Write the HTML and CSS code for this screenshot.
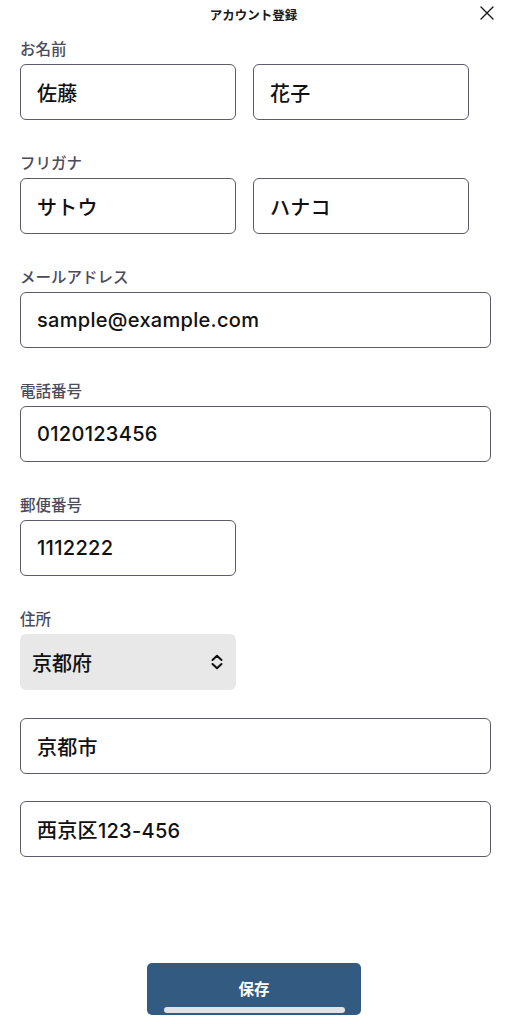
FILE: index.html
```html
<!DOCTYPE html>
<html lang="ja">
<head>
<meta charset="utf-8">
<link rel="stylesheet" href="styles.css">
</head>
<body>
<div class="page">
  <header class="header">
    <h1 class="title">アカウント登録</h1>
    <button class="close" aria-label="閉じる">
      <svg width="14" height="14" viewBox="0 0 14 14"><path d="M1 1L13 13M13 1L1 13" stroke="#1a1a1a" stroke-width="1.4" fill="none" stroke-linecap="round"/></svg>
    </button>
  </header>
  <form class="form">
    <div class="group">
      <div class="label">お名前</div>
      <div class="row">
        <div class="field half">佐藤</div>
        <div class="field half">花子</div>
      </div>
    </div>
    <div class="group">
      <div class="label">フリガナ</div>
      <div class="row">
        <div class="field half">サトウ</div>
        <div class="field half">ハナコ</div>
      </div>
    </div>
    <div class="group">
      <div class="label">メールアドレス</div>
      <div class="field full">sample@example.com</div>
    </div>
    <div class="group">
      <div class="label">電話番号</div>
      <div class="field full">0120123456</div>
    </div>
    <div class="group">
      <div class="label">郵便番号</div>
      <div class="field half">1112222</div>
    </div>
    <div class="group address">
      <div class="label">住所</div>
      <div class="select half">
        <span>京都府</span>
        <svg width="14" height="16" viewBox="0 0 14 16"><path d="M2.5 6L7 1.8L11.5 6M2.5 10L7 14.2L11.5 10" stroke="#111" stroke-width="2" fill="none" stroke-linecap="round" stroke-linejoin="round"/></svg>
      </div>
      <div class="field full">京都市</div>
      <div class="field full">西京区123-456</div>
    </div>
  </form>
  <div class="footer">
    <button class="save" type="button">保存<span class="home"></span></button>
  </div>
</div>
</body>
</html>
```
FILE: styles.css
```css
* { box-sizing: border-box; }
html, body { margin: 0; padding: 0; background: #fff; }
body {
  font-family: "Noto Sans CJK JP", "Noto Sans", sans-serif;
  color: #111;
}
.page {
  width: 507px;
  height: 1024px;
  display: flex;
  flex-direction: column;
  position: relative;
}
.header {
  height: 29px;
  display: flex;
  align-items: center;
  justify-content: center;
  position: relative;
}
.title {
  margin: 0;
  font-size: 12.5px;
  font-weight: 700;
  color: #1a1a1a;
  line-height: 29px;
}
.close {
  position: absolute;
  right: 13px;
  top: 6px;
  width: 14px;
  height: 14px;
  padding: 0;
  border: 0;
  background: none;
  display: flex;
}
.form {
  padding: 8px 16px 0 20px;
  display: flex;
  flex-direction: column;
  gap: 31px;
}
.group {
  display: flex;
  flex-direction: column;
}
.label {
  font-size: 15.5px;
  line-height: 22px;
  color: #4a4b5c;
  font-weight: 500;
  margin-bottom: 5px;
}
.row {
  display: flex;
  gap: 17px;
}
.field {
  height: 56px;
  border: 1.5px solid #5a5b6b;
  border-radius: 6px;
  padding: 0 16px;
  display: flex;
  align-items: center;
  font-family: Inter, "Noto Sans CJK JP", sans-serif;
  font-size: 20px;
  font-weight: 500;
  letter-spacing: 0.3px;
  color: #111;
}
.half { width: 216px; }
.full { width: 471px; }
.address .field { margin-top: 28px; }
.address .field + .field { margin-top: 27px; }
.select {
  height: 56px;
  background: #e8e8e9;
  border-radius: 6px;
  padding: 0 12px 0 12px;
  display: flex;
  align-items: center;
  justify-content: space-between;
  font-size: 20px;
  font-weight: 500;
}
.footer {
  margin-top: auto;
  display: flex;
  justify-content: center;
  padding-bottom: 9px;
  padding-left: 1px;
}
.save {
  position: relative;
  width: 214px;
  height: 52px;
  background: #335b81;
  border: 0;
  border-radius: 5px;
  color: #fff;
  font-family: inherit;
  font-size: 15.5px;
  font-weight: 700;
  padding: 0 0 2px;
}
.home {
  position: absolute;
  left: 17px;
  right: 16px;
  bottom: 2px;
  height: 6px;
  border-radius: 3px;
  background: #e2e2e4;
}
```
